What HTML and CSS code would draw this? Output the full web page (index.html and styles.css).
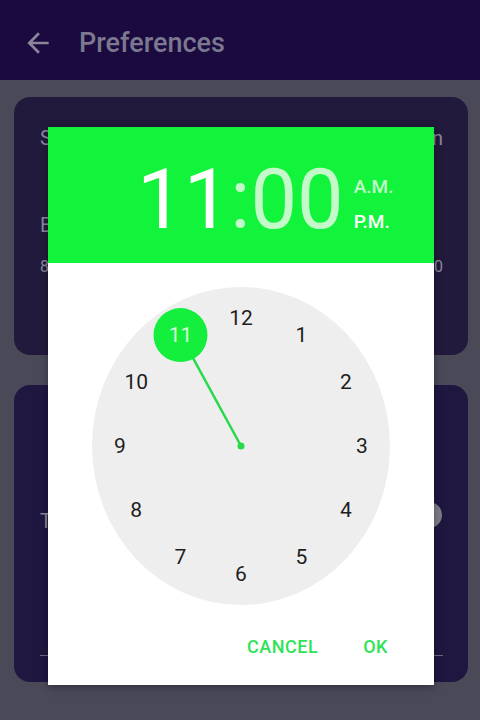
FILE: index.html
```html
<!DOCTYPE html>
<html lang="en">
<head>
<meta charset="utf-8">
<title>Preferences</title>
<link rel="stylesheet" href="styles.css">
</head>
<body>
<div class="screen">
  <header class="appbar">
    <svg class="back" viewBox="0 0 24 24" width="32" height="32" aria-hidden="true">
      <path d="M20 11H7.83l5.59-5.59L12 4l-8 8 8 8 1.41-1.41L7.83 13H20v-2z"/>
    </svg>
    <h1 class="title">Preferences</h1>
  </header>

  <main class="content">
    <section class="card card-one">
      <div class="row row-main">
        <span>Send reminder</span>
        <span>Every day at noon</span>
      </div>
      <div class="row row-main row-gap">
        <span>Bedtime</span>
        <span>&nbsp;</span>
      </div>
      <div class="row row-sub">
        <span>8:00</span>
        <span>10:00</span>
      </div>
    </section>

    <section class="card card-two">
      <div class="row row-main row-toggle">
        <span>Tone</span>
        <span class="thumb"></span>
      </div>
      <div class="divider"></div>
    </section>
  </main>

  <div class="dialog" role="dialog" aria-label="Select time">
    <div class="dialog-head">
      <div class="time"><span class="sel">11</span><span class="dim">:00</span></div>
      <div class="ampm">
        <span class="dim">A.M.</span>
        <span class="sel">P.M.</span>
      </div>
    </div>
    <div class="dialog-body">
      <svg class="dial" viewBox="0 0 298 318" width="298" height="318">
        <ellipse class="face" cx="149" cy="159" rx="149" ry="159"/>
        <line class="hand" x1="149" y1="159" x2="88.5" y2="48.1"/>
        <circle class="hand-dot" cx="149" cy="159" r="3.5"/>
        <circle class="knob" cx="88.5" cy="48.1" r="27"/>
        <text class="num" x="149" y="31">12</text>
        <text class="num" x="209.5" y="48.1">1</text>
        <text class="num" x="253.8" y="95">2</text>
        <text class="num" x="270" y="159">3</text>
        <text class="num" x="253.8" y="223">4</text>
        <text class="num" x="209.5" y="269.9">5</text>
        <text class="num" x="149" y="287">6</text>
        <text class="num" x="88.5" y="269.9">7</text>
        <text class="num" x="44.2" y="223">8</text>
        <text class="num" x="28" y="159">9</text>
        <text class="num" x="44.2" y="95">10</text>
        <text class="num num-sel" x="88.5" y="48.1">11</text>
      </svg>
    </div>
    <div class="dialog-actions">
      <button class="btn" type="button">CANCEL</button>
      <button class="btn" type="button">OK</button>
    </div>
  </div>
</div>
</body>
</html>
```

FILE: styles.css
```css
* { box-sizing: border-box; }

html, body {
  margin: 0;
  padding: 0;
}

body {
  font-family: Roboto, "Noto Sans", "Liberation Sans", sans-serif;
  background: #4a4958;
}

.screen {
  position: relative;
  width: 480px;
  height: 720px;
  overflow: hidden;
  background: #4a4958;
}

/* App bar */
.appbar {
  height: 80px;
  background: #1a0a3f;
  display: flex;
  align-items: center;
  padding-top: 6px;
}

.back {
  margin-left: 22px;
  fill: #8a869a;
  flex: none;
}

.title {
  margin: 0 0 0 25px;
  font-size: 27px;
  font-weight: 500;
  color: #7b7890;
  letter-spacing: 0;
}

/* Content behind dialog */
.content {
  padding: 17px 12px 0 14px;
  display: flex;
  flex-direction: column;
  gap: 30px;
}

.card {
  background: #221a3c;
  border-radius: 16px;
  padding: 0 25px 0 26px;
  color: #8c889c;
}

.card-one {
  height: 258px;
  padding-top: 29px;
}

.card-two {
  height: 297px;
  padding-top: 124px;
  background: #1f1740;
}

.row {
  display: flex;
  justify-content: space-between;
  align-items: center;
  white-space: nowrap;
}

.row-main {
  font-size: 20px;
  line-height: 24px;
}

.row-gap { margin-top: 63px; }

.row-sub {
  font-size: 16px;
  line-height: 20px;
  margin-top: 20px;
}

.row-toggle { padding-right: 1px; }

.thumb {
  width: 26px;
  height: 26px;
  border-radius: 50%;
  background: #7e7c88;
  margin-top: -12px;
}

.divider {
  margin-top: 122px;
  height: 1px;
  background: #6c6880;
}

/* Dialog */
.dialog {
  position: absolute;
  top: 127px;
  left: 48px;
  width: 386px;
  height: 558px;
  background: #ffffff;
  box-shadow: 0 2px 8px rgba(0, 0, 0, 0.35);
  display: flex;
  flex-direction: column;
}

.dialog-head {
  height: 136px;
  background: #12f33b;
  display: flex;
  align-items: flex-start;
  padding-left: 89px;
  color: #ffffff;
}

.time {
  margin-top: 31px;
  font-size: 83px;
  line-height: 84px;
  font-weight: 400;
  white-space: nowrap;
}

.sel { color: #ffffff; }
.dim { color: #c4f9c9; }

.ampm {
  margin-top: 42px;
  margin-left: 10px;
  display: flex;
  flex-direction: column;
  font-size: 19px;
  line-height: 35px;
  font-weight: 500;
}

.dialog-body {
  padding-top: 24px;
  display: flex;
  justify-content: center;
}

.dial { display: block; }

.face { fill: #eeeeee; }

.hand {
  stroke: #29d94b;
  stroke-width: 2.5;
}

.hand-dot { fill: #29d94b; }

.knob { fill: #14ee3c; }

.num {
  font-family: Roboto, "Noto Sans", sans-serif;
  font-size: 21px;
  fill: #1e1e1e;
  text-anchor: middle;
  dominant-baseline: central;
}

.num-sel { fill: #d6fbda; }

.dialog-actions {
  margin-top: 32px;
  display: flex;
  justify-content: flex-end;
  gap: 45px;
  padding-right: 46px;
}

.btn {
  background: none;
  border: 0;
  padding: 0;
  margin: 0;
  font-family: Roboto, "Noto Sans", sans-serif;
  font-size: 18px;
  line-height: 20px;
  font-weight: 500;
  letter-spacing: 0.5px;
  color: #2ee357;
}
```
